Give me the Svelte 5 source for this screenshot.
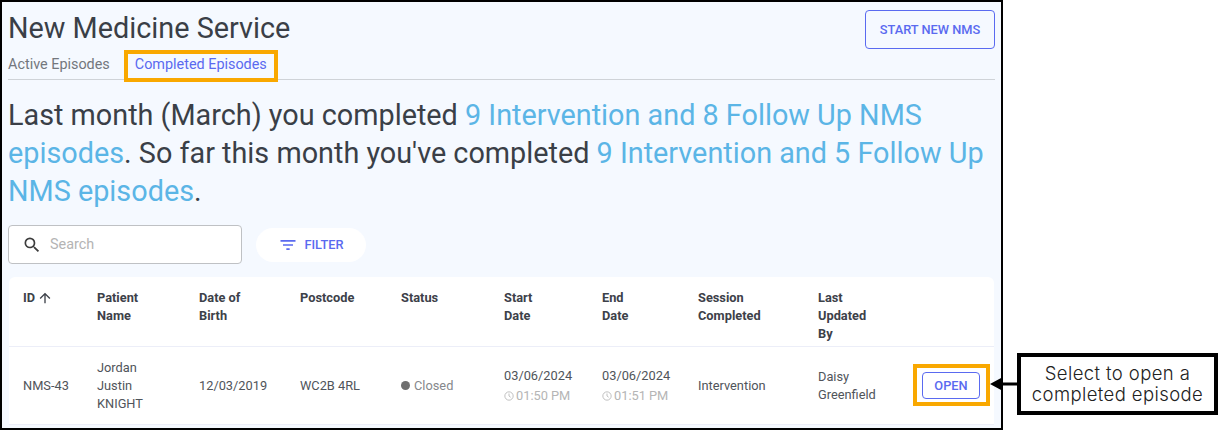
<script>
  const headers = [
    ['ID'], ['Patient', 'Name'], ['Date of', 'Birth'], ['Postcode'], ['Status'],
    ['Start', 'Date'], ['End', 'Date'], ['Session', 'Completed'], ['Last', 'Updated', 'By'], []
  ];
</script>

<div class="page">
  <main class="frame">
    <header class="top">
      <h1>New Medicine Service</h1>
      <button class="outline start">START NEW NMS</button>
    </header>
    <nav class="tabs">
      <span class="tab">Active Episodes</span>
      <span class="tab active">Completed Episodes</span>
    </nav>
    <p class="summary">Last month (March) you completed <span class="hl">9 Intervention and 8 Follow Up NMS episodes</span>. So far this month you've completed <span class="hl">9 Intervention and 5 Follow Up NMS episodes</span>.</p>
    <div class="tools">
      <label class="search">
        <svg width="20" height="20" viewBox="0 0 24 24"><path fill="#3c3c3c" d="M15.5 14h-.79l-.28-.27A6.47 6.47 0 0 0 16 9.500 6.500 6.500 0 1 0 9.500 16c1.610 0 3.090-.59 4.230-1.570l.27.28v.79l5 4.990L20.490 19l-4.990-5zm-6 0C7.010 14 5 11.990 5 9.500S7.010 5 9.500 5 14 7.010 14 9.500 11.990 14 9.500 14z"/></svg>
        <span class="placeholder">Search</span>
      </label>
      <button class="filter">
        <svg width="20" height="20" viewBox="0 0 24 24"><path fill="#5a6af0" d="M10 18h4v-2h-4v2zM3 6v2h18V6H3zm3 7h12v-2H6v2z"/></svg>
        FILTER
      </button>
    </div>
    <section class="table">
      <div class="row head">
        {#each headers as h, i}
          <div class="th">
            {#each h as line}<div class:idline={i === 0}>{line}{#if i === 0}<svg class="sort" width="16" height="16" viewBox="0 0 24 24"><path fill="#3d4149" d="M4 12l1.410 1.410L11 7.830V20h2V7.830l5.580 5.590L20 12l-8-8-8 8z"/></svg>{/if}</div>{/each}
          </div>
        {/each}
      </div>
      <div class="row body">
        <div>NMS-43</div>
        <div><div>Jordan</div><div>Justin</div><div>KNIGHT</div></div>
        <div>12/03/2019</div>
        <div>WC2B 4RL</div>
        <div class="status"><i class="dot"></i>Closed</div>
        <div>
          <div>03/06/2024</div>
          <div class="time"><svg width="10" height="10" viewBox="0 0 24 24"><circle cx="12" cy="12" r="10" fill="none" stroke="#b5b5b5" stroke-width="2"/><path d="M12 6v6l4 3" fill="none" stroke="#b5b5b5" stroke-width="2"/></svg>01:50 PM</div>
        </div>
        <div>
          <div>03/06/2024</div>
          <div class="time"><svg width="10" height="10" viewBox="0 0 24 24"><circle cx="12" cy="12" r="10" fill="none" stroke="#b5b5b5" stroke-width="2"/><path d="M12 6v6l4 3" fill="none" stroke="#b5b5b5" stroke-width="2"/></svg>01:51 PM</div>
        </div>
        <div>Intervention</div>
        <div><div>Daisy</div><div>Greenfield</div></div>
        <div class="action"><button class="outline open">OPEN</button></div>
      </div>
    </section>
    <div class="mark mark-tab"></div>
    <div class="mark mark-open"></div>
  </main>
  <div class="leader"><svg width="30" height="14" viewBox="0 0 30 14"><path d="M0 7l12-6.500v5h18v3H12v5z" fill="#000"/></svg></div>
  <aside class="callout">Select to open a completed episode</aside>
</div>

<style>
  :global(body) { margin: 0; background: #fff; }
  .page { position: relative; width: 1220px; height: 430px; overflow: hidden; font-family: Roboto, sans-serif; }
  .frame { position: relative; box-sizing: border-box; width: 1003px; height: 430px; border: 2px solid #000; background: #f5f9ff; padding: 0 6px; color: #3d4149; }
  .top { display: flex; justify-content: space-between; align-items: flex-start; padding-top: 8px; }
  h1 { margin: 0; padding-top: 1px; font-size: 28.8px; font-weight: 400; line-height: 34px; color: #3a3f47; }
  button { font-family: inherit; cursor: pointer; }
  .outline { background: transparent; border: 1px solid #5a6af0; border-radius: 4px; color: #5a6af0; font-weight: 500; font-size: 12.800px; padding: 0; }
  .start { width: 130px; height: 39px; }
  .tabs { display: flex; gap: 25px; height: 30px; margin-top: -1px; border-bottom: 1px solid #cfd3d8; align-items: center; font-size: 14.400px; padding-top: 1px; box-sizing: content-box; }
  .tab { color: #73777d; }
  .tab.active { color: #5a6af0; }
  .summary { margin: 16px 0 0; font-size: 28.8px; line-height: 38px; color: #3a3f47; width: 986px; }
  .hl { color: #5bb5e6; }
  .tools { display: flex; align-items: center; gap: 14px; margin-top: 15px; }
  .search { box-sizing: border-box; width: 234px; height: 39px; background: #fff; border: 1px solid #bfc1c4; border-radius: 4px; display: flex; align-items: center; gap: 8px; padding-left: 13px; font-size: 14.400px; }
  .placeholder { color: #b4b4b4; }
  .filter { width: 110px; height: 34px; border: 0; border-radius: 17px; background: #fff; color: #5a6af0; font-weight: 500; font-size: 12.800px; display: flex; align-items: center; justify-content: center; gap: 6px; padding: 0; }
  .table { margin-top: 13px; margin-left: 1px; width: 985px; background: #fff; border-radius: 6px 6px 0 0; }
  .row { display: grid; grid-template-columns: 74px 102px 101px 101px 103px 98px 96px 120px 95px 1fr; padding-left: 14px; font-size: 12.800px; line-height: 18px; }
  .head { height: 70px; box-sizing: border-box; padding-top: 12px; border-bottom: 1px solid #eceef8; font-weight: 700; color: #3d4149; }
  .body { height: 78px; box-sizing: border-box; align-items: center; border-bottom: 1px solid #eceef8; color: #50545a; }
  .idline { display: flex; align-items: center; gap: 2px; height: 18px; }
  .sort { display: block; }
  .status { display: flex; align-items: center; gap: 4px; color: #85888c; }
  .dot { width: 9px; height: 9px; border-radius: 50%; background: #6f6f6f; }
  .time { display: flex; align-items: center; gap: 2px; color: #b5b5b5; margin-top: 2px; }
  .action { display: flex; }
  .open { width: 58px; height: 27px; margin-left: 9px; }
  .mark { position: absolute; box-sizing: border-box; border: 4px solid #f9a800; }
  .mark-tab { left: 122px; top: 48px; width: 154px; height: 32px; }
  .mark-open { left: 911px; top: 362px; width: 77px; height: 42px; }
  .leader { position: absolute; left: 990px; top: 377px; height: 14px; line-height: 0; }
  .callout { position: absolute; left: 1017px; top: 353px; box-sizing: border-box; width: 201px; height: 62px; border: 4px solid #000; background: #fff; color: #222; display: flex; align-items: center; justify-content: center; text-align: center; font-family: Inter, sans-serif; font-weight: 300; font-size: 18.500px; letter-spacing: 0.4px; line-height: 21px; padding: 0 3px; }
</style>
